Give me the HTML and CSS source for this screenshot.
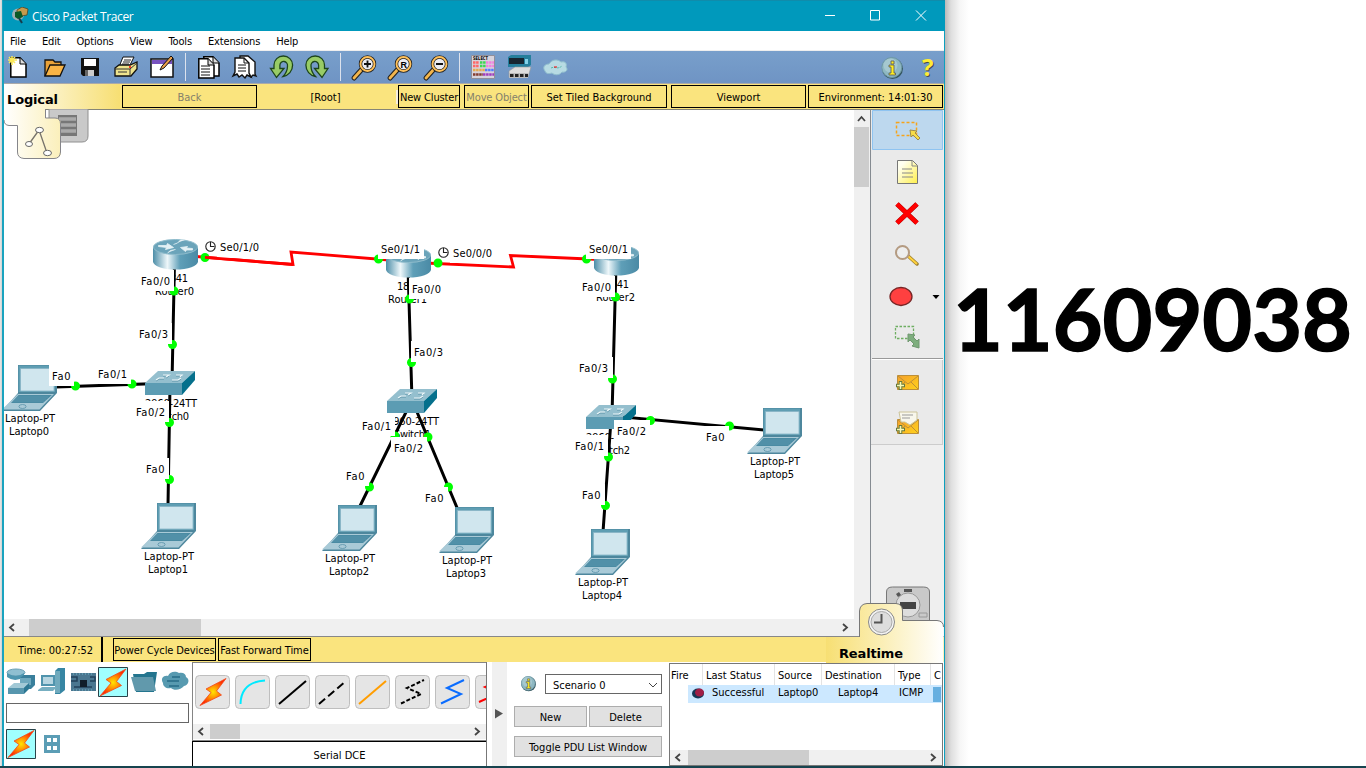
FILE: index.html
```html
<!DOCTYPE html>
<html lang="en">
<head>
<meta charset="utf-8">
<title>Cisco Packet Tracer</title>
<link rel="stylesheet" href="styles.css">
</head>
<body>
<svg class="defs" width="0" height="0">
<defs>
<linearGradient id="metal"><stop offset="0" stop-color="#4d8ea8"/><stop offset=".32" stop-color="#eef7fa"/><stop offset=".6" stop-color="#5f9fb8"/><stop offset="1" stop-color="#4a8aa5"/></linearGradient>
<radialGradient id="hot"><stop offset="0" stop-color="#ffe600"/><stop offset=".4" stop-color="#ff9c00"/><stop offset="1" stop-color="#ff2a00"/></radialGradient>
<linearGradient id="note" x2="1" y2="1"><stop offset=".2" stop-color="#fffff0"/><stop offset="1" stop-color="#fff04a"/></linearGradient>
<linearGradient id="fadeL"><stop offset="0" stop-color="#fff"/><stop offset="1" stop-color="#f7df73"/></linearGradient>
<linearGradient id="fadeR"><stop offset="0" stop-color="#f7df73"/><stop offset="1" stop-color="#fff"/></linearGradient>
<linearGradient id="env" x2="1" y2="1"><stop offset="0" stop-color="#f5a02c"/><stop offset="1" stop-color="#ffd21c"/></linearGradient>
<g id="laptop">
<path d="M16 0H55V28L38 46H0L16 28Z" fill="#4d879d"/>
<path d="M16.5 .5H53V27H16.5Z" fill="#5f9eb3"/>
<path d="M18.5 3.5H52V26H18.5Z" fill="#d0e6ee" stroke="#86b3c4" stroke-width=".8"/>
<path d="M16 29H52L37.5 44.5H0Z" fill="#a9cad7"/>
<path d="M16.5 30H50L41 38H9Z" fill="#4a8ba3"/>
<path d="M15 32h31M13 34h31M11 36h31" stroke="#63a0b5" stroke-width=".6"/>
<ellipse cx="20.5" cy="41.5" rx="3.6" ry="2" fill="none" stroke="#5a93a9" stroke-width=".8"/>
</g>
<g id="router">
<path d="M-22.5 -7.5V7A22.5 8 0 0 0 22.5 7V-7.5Z" fill="url(#metal)"/>
<ellipse cy="-7.5" rx="22" ry="7.500" fill="#6ba4ba" stroke="#8fbccc"/>
<path d="M-17-9h8l1-2 6 4-8 2 1-2-8-1ZM17-4.500H11l-1 1.500-5-4 7-1-1 1.500 6 .5ZM-2-10l4-1.500 3-3h4M0-5l-5 1-3 2.500" fill="#e4f1f5" stroke="#e4f1f5" stroke-width=".8"/>
</g>
<g id="switch">
<path d="M0 12L13 0H50L37 12Z" fill="#94bfce"/><path d="M0 12H37V24H0Z" fill="#5c9cb3"/><path d="M37 12L50 0V9L37 24Z" fill="#05708c"/>
<path d="M11 10l3-2h5M18 5h6l-3 2M27 10h6l3-2M31 5h6l-2 2" fill="none" stroke="#5d93a8" stroke-width="1"/><path d="M11 9l3-2h5M18 4h6l-3 2M27 9h6l3-2M31 4h6l-2 2" fill="none" stroke="#eef8fa" stroke-width="1.2"/>
</g>
<g id="bolt"><path d="M28 1.500L8 12 13 15.500 2 28.500 23.500 18 18.500 14Z" fill="url(#hot)" stroke="#f3461a" stroke-width=".8"/></g>
<g id="page"><path d="M.8.8H10L16 7V20H.8Z" fill="#fff" stroke="#000" stroke-width="1.5"/><path d="M10 1v6h6" fill="#ddd" stroke="#000"/></g>
<g id="info"><circle cx="11" cy="11.500" r="10.500" fill="#35565e"/><circle cx="10.300" cy="10.500" r="10" fill="#8fb8c2" stroke="#6d98a5"/><circle cx="9" cy="8.500" r="7" fill="#a5c8cf"/><path d="M7.500 8h5v8h1.500v2h-6.500v-2h2v-6h-2zM9.500 4h3v3h-3z" fill="#ffed20" stroke="#555" stroke-width=".8"/></g>
<g id="mag"><path d="M2 22L11 12" stroke="#222" stroke-width="5" stroke-linecap="round"/><path d="M2 22L11 12" stroke="#f4b64c" stroke-width="2.800" stroke-linecap="round"/><circle cx="15.500" cy="8" r="7" fill="#ececf2" stroke="#222" stroke-width="3.400"/><circle cx="15.500" cy="8" r="7" fill="none" stroke="#ffc15b" stroke-width="1.900"/></g>
</defs>
</svg>
<div class="desktop">
<div class="edge"></div>
<main class="window">
<header class="titlebar">
<svg width="18" height="18" viewBox="0 0 18 18"><ellipse cx="7" cy="7.500" rx="6" ry="6" fill="#9bb0b5"/><path d="M6 3l5-3 6 2-1 6-6 1-4-2z" fill="#c59a4d" stroke="#4e3b18" stroke-width=".7"/><path d="M4 5l6-1 2 6-5 2-3-2z" fill="#0a5926"/><path d="M8 11l3 5" stroke="#163c4b" stroke-width="2"/></svg>
<span class="title">Cisco Packet Tracer</span>
<svg class="winbtns" width="104" height="12" viewBox="0 0 104 12" fill="none" stroke="#fff" stroke-width="1"><path d="M1 5.500h10M46.500.5h9v9.500h-9zM92 .5l10 10M102 .5l-10 10"/></svg>
</header>
<nav class="menubar"><span>File</span><span>Edit</span><span>Options</span><span>View</span><span>Tools</span><span>Extensions</span><span>Help</span></nav>
<div class="toolbar">
<svg width="940" height="32" viewBox="4 51 940 32">
<use href="#page" x="10" y="57"/><path d="M12 56v9M8 60h9M9 57l6 6M15 57l-6 6" stroke="#f9e85b" stroke-width="1.600"/>
<path d="M45 76V60h8l2 2h6v4" fill="#e9a239" stroke="#111" stroke-width="1.300"/><path d="M45 76l5-11h15l-5 11z" fill="#f9b446" stroke="#111" stroke-width="1.300"/>
<path d="M81 58h18v18H83l-2-2z" fill="#111"/><path d="M84 59h12v7H84z" fill="#fff"/><path d="M85 70h9v6h-9z" fill="#ccc"/><path d="M85 70h3v6h-3z" fill="#666"/>
<path d="M119 67l4-10h11l-5 10z" fill="#fff" stroke="#111"/><path d="M124 60h7M123 62h7M122 64h7" stroke="#222"/><path d="M115 68l4-3h11l7-3v7l-6 7h-16z" fill="#eee38d" stroke="#111" stroke-width="1.300"/><path d="M115 69h15l7-6M130 69v7M118 72h9" fill="none" stroke="#333"/><circle cx="130" cy="67" r="1" fill="red"/>
<path d="M151 59h22v18h-22z" fill="#fff" stroke="#111" stroke-width="1.500"/><path d="M152 60h20v4h-20z" fill="#7853c0"/><path d="M160 70l2-4 9-10 2 2-9 10z" fill="#eda04b" stroke="#111"/>
<path d="M185.500 53v28M340.500 53v28M459.500 53v28" stroke="#dce2ed"/>
<use href="#page" x="203" y="56"/><use href="#page" x="198" y="58"/><path d="M201 66h9M201 69h9M201 72h9M201 75h9" stroke="#111"/>
<g transform="translate(36)"><path d="M204 56h8l7 6v12l1 2-3-1-2 2-3-2h-8z" fill="#fff" stroke="#111" stroke-width="1.400"/><path d="M199 58h9l5 5v10l2 4-4-2-2 3-3-3-3 2-2-3-4 2 2-4z" fill="#fff" stroke="#111" stroke-width="1.400"/><path d="M208 58v5h5M202 65h8M202 68h8M202 71h8" fill="none" stroke="#111"/></g>
<path id="undo" d="M276.500 77.500L270.500 68.500h3.500V65a9.300 9 0 0 1 18.600 0c0 6-4 10.500-9.600 11.500 3-3 4.500-6 4.500-10.500a3.800 4 0 0 0-7.600-1v3.500H284z" fill="#98cc66" stroke="#1d451c" stroke-width="1.300"/>
<use href="#undo" transform="translate(598.500) scale(-1 1)"/>
<use href="#mag" x="352" y="56"/><use href="#mag" x="388" y="56"/><use href="#mag" x="424" y="56"/><path d="M364 64h7M367.500 60.500v7M436 64h7" stroke="#111" stroke-width="1.800"/><text x="400.500" y="67.500" class="rglyph">R</text>
<path d="M471.500 55.500h23v23h-23z" fill="#d7d4dc" stroke="#908f9a"/><text x="473" y="60" class="tiny" textLength="15" lengthAdjust="spacingAndGlyphs">SELECT</text>
<g stroke-width="2.500" stroke-dasharray="2.500 .6" fill="none"><path d="M473 62.500h6M473 66h6" stroke="#f66"/><path d="M480 62.500h6M480 66h6" stroke="#3dd650"/><path d="M486 62.500h8M486 66h8" stroke="#f27fe0"/><path d="M473 70h12" stroke="#e8aa4c"/><path d="M485 70h9" stroke="#547bff"/><path d="M473 74.500h10" stroke="#843b2e"/><path d="M483 74.500h11" stroke="#a03bbd"/></g>
<path d="M508 57l3-2h20v10l-3 2h-20z" fill="#257f9c"/><path d="M509 58h15v6h-15z" fill="#172631"/><path d="M525 59h3v5h-3" fill="#86d2e8"/><path d="M509 71l6-4h16l-3 10h-19z" fill="#ddd" stroke="#999" stroke-width=".6"/><path d="M509 73h19v5h-19z" fill="#bbb"/><path d="M510 75.500h18" stroke="#222" stroke-width="3" stroke-dasharray="3.500 1.500"/>
<path d="M545 71c-3-4 0-7 4-7 3-5 9-5 12-2 5-1 6 2 5 5 3 3-1 6-4 5-3 4-8 3-10 1-3 1-6 1-7-2z" fill="#b7dbe3" stroke="#91bfce"/><path d="M551 68c4-2 6 2 11-2" stroke="#5ba" fill="none" stroke-dasharray="2 1"/><path d="M554 67h3" stroke="red"/>
<use href="#info" x="881.500" y="57"/><text x="923" y="76.500" class="helpshade">?</text><text x="922" y="75.500" class="help">?</text>
</svg>
</div>
<div class="locbar">
<span class="pb w135 off">Back</span><span class="root">[Root]</span><span class="pb w62 tight">New Cluster</span><span class="pb w66 off tight">Move Object</span><span class="pb w136">Set Tiled Background</span><span class="pb w135b">Viewport</span><span class="pb w135">Environment: 14:01:30</span>
<svg class="logical" width="116" height="78" viewBox="4 83 116 78">
<path d="M49 109h39v27q0 6-6 6H49z" fill="#c9c9c9" stroke="#909090"/><path d="M58 115h19v21H58z" fill="#777"/><path d="M59 119h17M59 125h17M59 131h17" stroke="#aaa" stroke-width="3.500"/>
<path d="M4 84H120V109H46V118H55Q61 118 61 124V152Q61 158 55 158H24Q17 158 17 152V125H9Q4 125 4 120Z" fill="url(#fadeL)"/><path d="M45.500 109V118H55Q60.500 118 60.500 124V152Q60 158.500 54 158.500H24Q17.500 158 17.500 152V125.500H9Q4 125 4 120" fill="none" stroke="#85858a"/>
<path d="M29 144l10-14 8 23" fill="none" stroke="#77736b" stroke-width="1.300"/><g fill="#fff" stroke="#666"><ellipse cx="29" cy="144" rx="3.500" ry="2.500"/><ellipse cx="39.500" cy="130" rx="4" ry="2.700"/><ellipse cx="47.500" cy="153" rx="4" ry="2.700"/></g>
<text x="7" y="104" class="tabname" textLength="51">Logical</text></svg>
</div>
<section class="workspace">
<div class="canvaswrap">
<svg class="canvas" width="850" height="509" viewBox="4 110 850 509">
<g class="devname">
<text x="164" y="282" textLength="24">1841</text><text x="155" y="295" textLength="39">Router0</text>
<text x="397" y="290" textLength="24">1841</text><text x="388" y="303" textLength="39">Router1</text>
<text x="605" y="288" textLength="24">1841</text><text x="596" y="301" textLength="39">Router2</text>
<text x="145" y="407" textLength="52">2960-24TT</text><text x="152" y="420" textLength="37">Switch0</text>
<text x="387" y="425" textLength="52">2960-24TT</text><text x="394" y="438" textLength="37">Switch1</text>
<text x="586" y="441" textLength="52">2960-24TT</text><text x="593" y="454" textLength="37">Switch2</text>
</g>
<g class="copper"><path d="M174.500 262L172 383L56 387M170 385L168 505M408 268L412 400L360 506M412 400L458 510M616 265L612 416L765 430M611 420L603 532"/></g>
<path class="serial" d="M190 256L293 264.500L291 252L395 260.500M425 263L513.500 267L510.500 255.500L600 259.500"/>
<use href="#router" x="175.500" y="254.500"/><use href="#router" x="408.500" y="262.500"/><use href="#router" x="616.500" y="260.500"/>
<use href="#switch" x="145" y="371"/><use href="#switch" x="387" y="389"/><use href="#switch" x="586" y="405"/>
<use href="#laptop" x="2" y="365"/><use href="#laptop" x="141" y="503"/><use href="#laptop" x="322" y="505"/><use href="#laptop" x="439" y="507"/><use href="#laptop" x="575" y="529"/><use href="#laptop" x="747" y="408"/>
<path class="dots" d="M205 257.500h0M174 291h0M172.500 344.500h0M75.500 386h0M132 384h0M169.500 422.500h0M169.500 479.500h0M378.500 259h0M438 263h0M409.500 299h0M411.500 362.500h0M428 437h0M395 436h0M369.500 487h0M448.500 487h0M586.500 259h0M615.500 297h0M612.500 379h0M608.500 457h0M605.500 505.500h0M650.500 420.500h0M729.500 426h0"/>
<path fill="#fff" d="M138 270h36v21h-36zM136 323h36v21h-36zM49 365h25v21h-25zM95 363h36v21h-36zM133 401h36v21h-36zM143 458h26v21h-26zM217 237h46v21h-46zM378 238h46v21h-46zM450 242h45v21h-45zM409 278h36v21h-36zM411 341h36v21h-36zM359 415h36v21h-36zM391 437h36v21h-36zM343 465h26v21h-26zM422 487h26v21h-26zM586 238h45v21h-45zM579 276h36v21h-36zM577 357h36v21h-36zM572 435h36v21h-36zM614 420h36v21h-36zM579 484h26v21h-26zM703 426h26v21h-26z"/>
<path class="serial" d="M205 257.300L293 264.500"/>
<g class="port">
<text x="141" y="285" textLength="29">Fa0/0</text><text x="139" y="338" textLength="29">Fa0/3</text><text x="52" y="380" textLength="18.500">Fa0</text><text x="98" y="378" textLength="29">Fa0/1</text><text x="136" y="416" textLength="29">Fa0/2</text><text x="146" y="473" textLength="18.500">Fa0</text>
<text x="220" y="251" textLength="39">Se0/1/0</text><text x="381" y="253" textLength="39">Se0/1/1</text><text x="453" y="257" textLength="39">Se0/0/0</text><text x="412" y="293" textLength="29">Fa0/0</text><text x="414" y="356" textLength="29">Fa0/3</text><text x="362" y="430" textLength="29">Fa0/1</text><text x="394" y="452" textLength="29">Fa0/2</text><text x="346" y="480" textLength="18.500">Fa0</text><text x="425" y="502" textLength="18.500">Fa0</text>
<text x="589" y="253" textLength="39">Se0/0/1</text><text x="582" y="291" textLength="29">Fa0/0</text><text x="579" y="372" textLength="29">Fa0/3</text><text x="575" y="450" textLength="29">Fa0/1</text><text x="617" y="435" textLength="29">Fa0/2</text><text x="582" y="499" textLength="18.500">Fa0</text><text x="706" y="441" textLength="18.500">Fa0</text>
<text x="5" y="422" textLength="50">Laptop-PT</text><text x="9" y="435" textLength="40">Laptop0</text><text x="144" y="560" textLength="50">Laptop-PT</text><text x="148" y="573" textLength="40">Laptop1</text><text x="325" y="562" textLength="50">Laptop-PT</text><text x="329" y="575" textLength="40">Laptop2</text><text x="442" y="564" textLength="50">Laptop-PT</text><text x="446" y="577" textLength="40">Laptop3</text><text x="578" y="586" textLength="50">Laptop-PT</text><text x="582" y="599" textLength="40">Laptop4</text><text x="750" y="465" textLength="50">Laptop-PT</text><text x="754" y="478" textLength="40">Laptop5</text>
</g>
<g fill="#fff" stroke="#222" stroke-width="1.100"><circle cx="210.500" cy="246.500" r="4.700"/><path d="M210.500 242v4.500h4"/><circle cx="443.500" cy="252.500" r="4.700"/><path d="M443.500 248v4.500h4"/></g>
</svg>
<div class="vscroll"><svg width="15" height="17"><path d="M4 11l3.500-4 3.500 4" class="arrow"/></svg><i></i></div>
<div class="hscroll"><svg width="25" height="17"><path d="M10 5l-4 3.500 4 3.500" class="arrow"/></svg><i></i><svg class="end" width="15" height="17"><path d="M4 5l4 3.500-4 3.500" class="arrow"/></svg></div>
</div>
<aside class="tools">
<svg width="72" height="335" viewBox="871 110 72 335">
<path d="M871 110h72v335h-72z" fill="#eaeaea"/><path d="M872.500 110.500h70v39h-70z" fill="#bdd8ee" stroke="#8fc4f1"/>
<path d="M896.500 122.500h20v13h-20z" fill="none" stroke="#f7a31b" stroke-width="1.500" stroke-dasharray="3 2"/><path d="M910 130l7 1-2 2 5 5-2 2-5-5-2 2z" fill="#f7dc46" stroke="#9f8b47"/>
<path d="M897.500 160.500h15l5 5v18h-20z" fill="url(#note)" stroke="#777"/><path d="M912 161v5h5M902 169h10M902 173h11M902 177h11" fill="none" stroke="#888"/>
<path d="M897 204l20 19M917 204l-20 19" stroke="#a60000" stroke-width="5"/><path d="M897 204l20 19M917 204l-20 19" stroke="#f00" stroke-width="4.300"/>
<path d="M907 255l10 9" stroke="#9d8030" stroke-width="3.500" stroke-linecap="round"/><path d="M908 256l9 8" stroke="#ffd13c" stroke-width="2"/><circle cx="902.500" cy="252.500" r="6.500" fill="#eee" stroke="#b49b82" stroke-width="2"/>
<ellipse cx="901" cy="296.500" rx="11" ry="9" fill="#ff4040" stroke="#772525" stroke-width="1.300"/><path d="M932.500 295h7l-3.500 4z"/>
<path d="M895.500 326.500h18v12h-18z" fill="none" stroke="#6eae62" stroke-width="1.300" stroke-dasharray="2.500 1.500"/><path d="M908 334l7 1-2 2 4 4 2-2v9l-7-2 2-2-4-4-2 2z" fill="#7eae7e" stroke="#709770"/>
<path d="M872 358.500h71" stroke="#999"/><path d="M872 359.500h71" stroke="#fff"/>
<g id="mail"><path d="M897.500 375.500h21v14h-21z" fill="url(#env)" stroke="#bd8f38"/><path d="M898 376l10 8 10-8M898 389l7-7M918 389l-7-7" fill="none" stroke="#bd8f38"/><path d="M900.500 381v9M896 385.500h9" stroke="#65793b" stroke-width="3.500"/><path d="M900.500 382v7M897 385.500h7" stroke="#f8f8b4" stroke-width="1.600"/></g>
<use href="#mail" y="44"/><path d="M899 412h18v8l-7 5-5-3h-4z" fill="#f8f7ec" stroke="#ccc49a"/><path d="M902 415h11M902 418h8" stroke="#999"/><path d="M871 444.500h72M942.500 360v85" stroke="#ccc"/>
</svg>
<svg class="stop" width="46" height="36" viewBox="885 586 46 36"><path d="M886.500 622V592q0-5 6-5h31q6 0 6 5v30z" fill="#c9c9c9" stroke="#777"/><circle cx="908" cy="605" r="12" fill="#ddd" stroke="#999"/><path d="M904 589h8v3h-8zM896 594l3-2 2 3-3 2z" fill="#555"/><path d="M900 602h16v7h-16z" fill="#444"/><path d="M919 613h8v4h-8z" fill="none" stroke="#999"/></svg>
</aside>
</section>
<div class="timebar"><span class="time">Time: 00:27:52</span><i></i><span class="pb w104 tight2">Power Cycle Devices</span><span class="pb w94 tight2">Fast Forward Time</span>
<svg class="real" width="118" height="60" viewBox="826 603 118 60"><path d="M826 637H859.500V611Q860 604 867 603.500H896Q902.500 604 902.500 611V620.500H937Q943.500 621 943.500 627V663H826Z" fill="url(#fadeR)"/><path d="M859.500 637V611Q860 604 867 603.500H896Q902.500 604 902.500 611V620.500H937Q943.500 621 943.500 627" fill="none" stroke="#777"/><circle cx="881.500" cy="622" r="13" fill="#f4f4f4" stroke="#888"/><circle cx="881.500" cy="622" r="10.500" fill="#ddd" stroke="#aaa"/><path d="M881.500 614v8.500H874" fill="none" stroke="#555" stroke-width="2"/><text x="839" y="658" class="tabname" textLength="64">Realtime</text></svg>
</div>
<section class="bottom">
<div class="kinds">
<svg class="row1" width="188" height="36" viewBox="4 664 188 36">
<g><ellipse cx="16" cy="672.500" rx="9" ry="3.500" fill="#8fbfd1" stroke="#6ba1b5"/><path d="M7 673v4q8 6 17 0v-4q-8 6-17 0" fill="#4e96b0"/><path d="M20 678l4-3h11v10l-4 4h-11z" fill="#397f9b"/><path d="M20 678h11v7H20z" fill="#6fa9be"/><path d="M8 688l6-5h15l-5 5z" fill="#a2c9d6"/><path d="M8 688h16v6H8z" fill="#5796ae"/><path d="M24 688l5-5v6l-5 5z" fill="#2d7893"/></g>
<path d="M55 671l3-3h7v22l-5 4h-5z" fill="#3786a3"/><path d="M55 671h5v22h-5z" fill="#70aabd"/><path d="M41 675h14v11h-14z" fill="#5094ad"/><path d="M43 677h10v7H43z" fill="#b7d6e1"/><path d="M38 690l4-3h15l-4 4h-15z" fill="#77afc1"/>
<path d="M71 673h25v18H71z" fill="#4b7790"/><path d="M71 677h6v4h-6M90 677h5v4h-5M74 687h18" fill="none" stroke="#23415a" stroke-width="1.500"/><path d="M80 680h7v7h-7z" fill="#101d29"/><path d="M73 674h20M73 690h20" stroke="#75b8cb" stroke-dasharray="1 2"/>
<path d="M98.500 667.500h29v29h-29z" fill="#a0ffff" stroke="#29434a"/><use href="#bolt" x="98" y="667.500"/>
<path d="M133 674h11l3-2h10l-3 20h-18z" fill="#24758e"/><path d="M131 677h22l3 14h-21z" fill="#6199ac"/>
<path d="M163 683c-3-5 1-8 5-7 2-5 8-5 11-3 4-1 7 1 7 4 4 2 3 8-2 9-3 4-10 5-13 2-4 1-8-1-8-5z" fill="#579ab0"/><path d="M167 681h12M172 677h8M169 686h10" fill="none" stroke="#276c86" stroke-width="1.500"/>
</svg>
<div class="field"></div>
<svg width="60" height="32" viewBox="6 728 60 32"><path d="M6.500 729.500h29v29h-29z" fill="#a0ffff" stroke="#29434a"/><use href="#bolt" x="6" y="729"/><path d="M44 735h16v18H44z" fill="#5b9db5"/><path d="M47 738h4v4h-4zM53 738h4v4h-4zM47 746h4v4h-4zM53 746h4v4h-4z" fill="#fff"/></svg>
</div>
<div class="cables">
<div class="cablebox">
<svg width="294" height="61" viewBox="193 663 294 61">
<g fill="#e5e5e5" stroke="#bebebe"><rect id="k" x="195.500" y="675.500" width="34" height="33" rx="4"/><use href="#k" x="40"/><use href="#k" x="80"/><use href="#k" x="120"/><use href="#k" x="160"/><use href="#k" x="200"/><use href="#k" x="240"/><use href="#k" x="280"/></g>
<use href="#bolt" x="198" y="677"/><g fill="none" stroke-width="2"><path d="M240.500 704Q241 682 265 680.500" stroke="#00eaff"/><path d="M279 704l27-23" stroke="#000"/><path d="M319 704l27-23" stroke="#000" stroke-dasharray="8 4"/><path d="M359 704l27-23" stroke="#ff9d00"/><path d="M401 703.500l20-9.500-14-6 17-8" stroke="#000" stroke-dasharray="4 2"/><path d="M441 703.500l20-9.500-14-6 17-8" stroke="#0a6cff"/><path d="M479 702l20-9-14-6 17-8" stroke="#f00"/></g>
</svg>
<div class="hscroll small"><svg width="17" height="15"><path d="M10 4l-4 3.500 4 3.500" class="arrow"/></svg><i></i><svg class="end" width="17" height="15"><path d="M6 4l4 3.500-4 3.500" class="arrow"/></svg></div>
</div>
<div class="cablename">Serial DCE</div>
</div>
<div class="splitter"><svg width="15" height="100"><path d="M3 47l8 4.500-8 5z" fill="#555"/></svg></div>
<div class="scenario">
<div class="scrow"><svg width="16" height="16" viewBox="0 0 23 23"><use href="#info"/></svg><div class="select">Scenario 0<svg width="10" height="7"><path d="M1 1l4 4 4-4" fill="none" stroke="#444"/></svg></div></div>
<div class="btns"><span>New</span><span>Delete</span></div>
<div class="btns"><span>Toggle PDU List Window</span></div>
</div>
<div class="pdu">
<div class="head"><span>Fire</span><span>Last Status</span><span>Source</span><span>Destination</span><span>Type</span><span>C</span></div>
<div class="line"><svg width="13" height="14"><ellipse cx="7" cy="8.500" rx="6" ry="5" fill="#153754"/><ellipse cx="8.500" cy="7.500" rx="4.500" ry="4" fill="#a01e45"/></svg><span>Successful</span><span>Laptop0</span><span>Laptop4</span><span>ICMP</span><b></b></div>
<div class="hscroll pscroll"><svg width="18" height="15"><path d="M10 4l-4 3.500 4 3.500" class="arrow"/></svg><i></i><svg class="end" width="17" height="15"><path d="M6 4l4 3.500-4 3.500" class="arrow"/></svg></div>
</div>
</section>
</main>
<section class="side"><svg width="421" height="766" viewBox="945 0 421 766"><text x="953" y="351" class="number" textLength="399" lengthAdjust="spacingAndGlyphs">11609038</text></svg></section>
</div>
<footer class="taskbar"></footer>
</body>
</html>
```
FILE: styles.css
```css
* { box-sizing: border-box; }
body { margin: 0; width: 1366px; height: 768px; overflow: hidden; background: #fff; color: #000; font: 11px "DejaVu Sans Condensed", "DejaVu Sans", sans-serif; font-stretch: condensed; }
svg { display: block; flex: none; }
i { font-style: normal; }
.defs { position: absolute; }
.desktop { display: flex; height: 766px; }
.edge { width: 2px; background: linear-gradient(90deg, #e9e9e9, #d2d2d2); }
.window { width: 943px; border-left: 2px solid #1aa3bf; border-right: 1px solid #0d9fbd; display: flex; flex-direction: column; background: #fff; }
.side { width: 421px; background: linear-gradient(90deg, #b9b9b9 0, #dedede 6px, #f6f6f6 15px, #fff 24px); }
.taskbar { height: 2px; background: #17444f; }
.titlebar { height: 31px; margin: 0 -1px; background: #0099bc; display: flex; align-items: center; padding-left: 8px; color: #fff; border-top: 1px solid #108cab; }
.title { font: 12px "Open Sans", sans-serif; margin-left: 3px; width: 102px; white-space: nowrap; letter-spacing: -.35px; }
.winbtns { margin-left: auto; margin-right: 17px; }
.menubar { height: 20px; display: flex; align-items: center; padding: 2px 0 0 6px; gap: 16px; border-bottom: 1px solid #eee; letter-spacing: -.15px; }
.toolbar { height: 32px; background: linear-gradient(#789fcb, #6f94c4); }
.locbar { position: relative; height: 27px; background: #fae47e; border-top: 1px solid #aaa; border-bottom: 1px solid #858577; display: flex; align-items: center; padding-left: 118px; }
.pb { height: 23px; padding-top: 1px; border: 1px solid #000; display: flex; align-items: center; justify-content: center; white-space: nowrap; flex: none; background: #fae47e; }
.off { color: #85816c; }
.tight { letter-spacing: -.15px; }
.tight2 { letter-spacing: -.1px; }
.w135 { width: 135px; }
.w62 { width: 62px; margin-right: 4px; }
.w66 { width: 65px; margin-right: 2px; }
.w136 { width: 136px; margin-right: 4px; }
.w135b { width: 135px; margin-right: 2px; }
.w104 { width: 103px; margin-right: 2px; }
.w94 { width: 93px; }
.root { width: 141px; padding-right: 2px; padding-top: 1px; text-align: center; border-right: 2px solid #f6efe0; }
.logical { position: absolute; left: 0; top: -1px; z-index: 3; }
.tabname { font: bold 13px "DejaVu Sans", sans-serif; }
.rglyph { font: bold 9px "Liberation Sans", sans-serif; }
.tiny { font: bold 5px "DejaVu Sans", sans-serif; }
.help, .helpshade { font: bold 24px "Open Sans", sans-serif; fill: #ffed35; }
.helpshade { fill: #424a52; }
.workspace { height: 527px; display: flex; border-bottom: 1px solid #888; }
.canvaswrap { width: 867px; display: grid; grid-template-columns: 850px 17px; grid-template-rows: 509px 17px; background: #f0f0f0; border-right: 1px solid #858b91; }
.canvas { background: #fff; }
.copper { fill: none; stroke: #000; stroke-width: 3; }
.serial { fill: none; stroke: #f00; stroke-width: 2.800; }
.dots { stroke: #0f0; stroke-width: 9; stroke-linecap: round; }
.vscroll i { display: block; width: 15px; height: 60px; background: #cdcdcd; }
.vscroll svg { width: 15px; }
.arrow { fill: none; stroke: #444; stroke-width: 1.800; }
.hscroll { display: flex; background: #f0f0f0; height: 15px; }
.canvaswrap .hscroll { align-items: flex-start; height: 17px; }
.hscroll i { width: 172px; height: 100%; background: #cdcdcd; }
.hscroll .end { margin-left: auto; }
.tools { width: 73px; background: #efefef; display: flex; flex-direction: column; }
.stop { margin: 141px 0 0 14px; }
.timebar { position: relative; height: 25px; background: #fae47e; display: flex; align-items: center; }
.time { width: 97px; padding-left: 14px; padding-top: 1px; }
.timebar i { width: 2px; height: 25px; background: #000; margin-right: 10px; }
.real { position: absolute; right: 0; top: -34px; }
.bottom { height: 104px; display: flex; }
.kinds { width: 188px; padding-top: 2px; }
.field { width: 183px; height: 20px; border: 1px solid #666; margin: 3px 0 5px 2px; }
.field + svg { margin-left: 2px; }
.cables { width: 295px; height: 104px; border-right: 1px solid #777; }
.cablebox { height: 79px; border: 1px solid #858585; border-right: 0; overflow: hidden; }
.small i { width: 30px; }
.cablename { height: 25px; border: 1px solid #000; border-bottom: 0; border-right: 0; text-align: center; padding-top: 7px; }
.splitter { width: 15px; margin-left: 5px; background: #f0f0f0; }
.scenario { width: 162px; padding: 12px 7px 0 7px; }
.scrow { display: flex; align-items: center; gap: 8px; padding-left: 7px; }
.select { width: 118px; height: 20px; border: 1px solid #666; display: flex; justify-content: space-between; align-items: center; padding: 2px 3px 0 7px; }
.btns { display: flex; gap: 2px; margin-top: 12px; }
.btns + .btns { margin-top: 9px; }
.btns span { flex: 1; height: 21px; padding-top: 1px; border: 1px solid #adadad; background: #e1e1e1; display: flex; align-items: center; justify-content: center; white-space: nowrap; }
.pdu { width: 274px; margin-top: 1px; height: 103px; border: 1px solid #777; display: flex; flex-direction: column; overflow: hidden; }
.head { height: 21px; display: grid; grid-template-columns: 33px 72px 47px 73px 36px 12px; line-height: 23px; }
.head span { border-right: 1px solid #e3e3e3; padding-left: 3px; white-space: nowrap; overflow: hidden; }
.head span:first-child { padding-left: 1px; }
.line { height: 18px; margin-left: 18px; background: #cce8ff; display: grid; grid-template-columns: 17px 66px 60px 61px 36px 13px; align-items: start; }
.line span { padding-left: 7px; line-height: 15px; }
.line svg { margin-left: 3px; }
.line b { height: 15px; margin: 2px 0 0 5px; background: #66afe0; }
.pscroll { margin-top: auto; }
.pscroll i { width: 121px; }
.number { font: bold 87px Lato, sans-serif; stroke: #000; stroke-width: 1.500px; }
```
